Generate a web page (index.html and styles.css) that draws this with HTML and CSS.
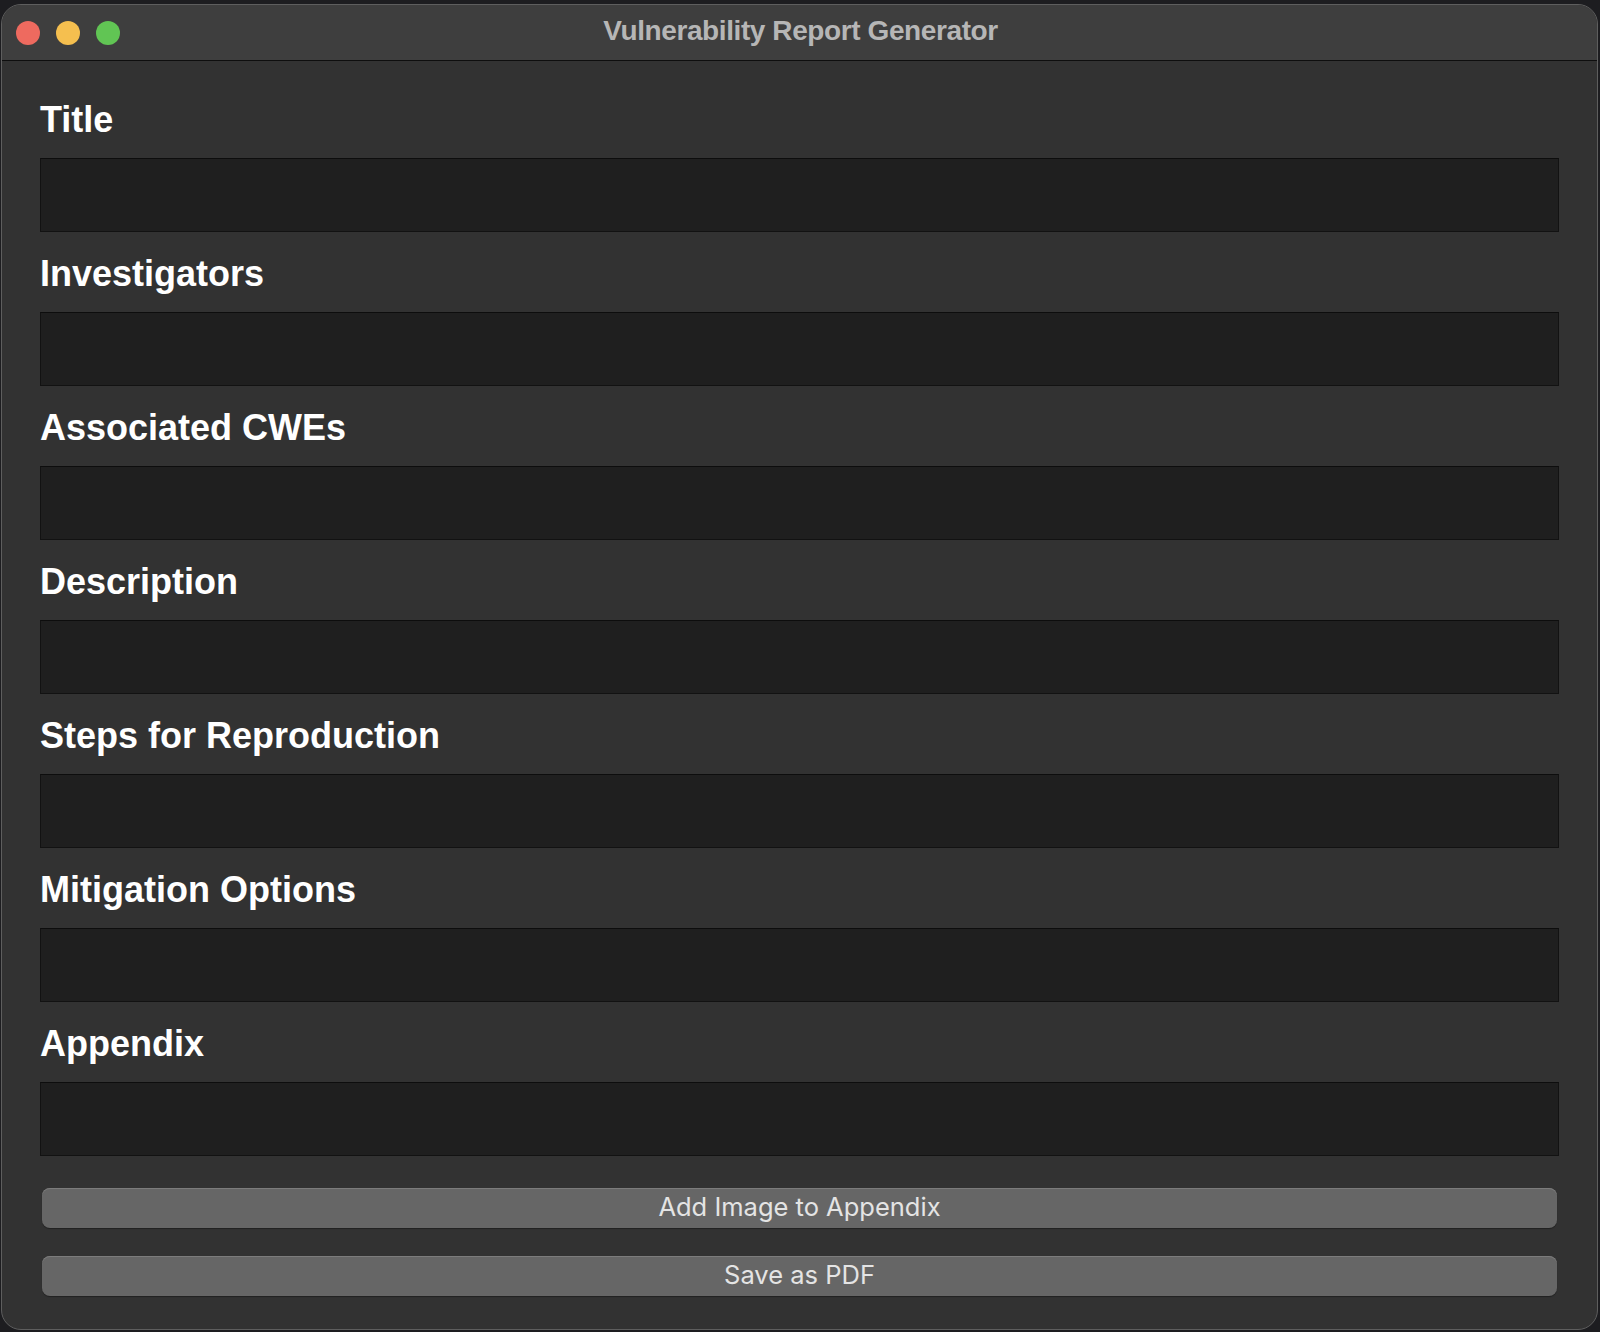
FILE: index.html
```html
<!DOCTYPE html>
<html lang="en">
<head>
<meta charset="utf-8">
<title>Vulnerability Report Generator</title>
<link rel="stylesheet" href="styles.css">
</head>
<body>
<div class="window">
  <header class="titlebar">
    <div class="lights">
      <span class="light red"></span>
      <span class="light yellow"></span>
      <span class="light green"></span>
    </div>
    <div class="wtitle">Vulnerability Report Generator</div>
  </header>
  <main class="content">
    <div class="field"><label class="label">Title</label><div class="input"></div></div>
    <div class="field"><label class="label">Investigators</label><div class="input"></div></div>
    <div class="field"><label class="label">Associated CWEs</label><div class="input"></div></div>
    <div class="field"><label class="label">Description</label><div class="input"></div></div>
    <div class="field"><label class="label">Steps for Reproduction</label><div class="input"></div></div>
    <div class="field"><label class="label">Mitigation Options</label><div class="input"></div></div>
    <div class="field"><label class="label">Appendix</label><div class="input"></div></div>
    <div class="buttons">
      <button class="btn">Add Image to Appendix</button>
      <button class="btn">Save as PDF</button>
    </div>
  </main>
</div>
</body>
</html>
```

FILE: styles.css
```css
html, body {
  margin: 0;
  padding: 0;
  background: #1d1d20;
  width: 1600px;
  height: 1332px;
  overflow: hidden;
}
body {
  padding-top: 4px;
  padding-left: 1px;
  box-sizing: border-box;
}
.window {
  width: 1597px;
  height: 1326px;
  box-sizing: border-box;
  border: 1px solid #5e5e5e;
  border-radius: 20px;
  background: #323232;
  overflow: hidden;
  display: flex;
  flex-direction: column;
}
.titlebar {
  height: 55px;
  flex: none;
  background: #3e3e3e;
  border-bottom: 1px solid #0e0e0e;
  position: relative;
  display: flex;
  align-items: center;
}
.lights {
  display: flex;
  gap: 16px;
  padding-left: 14px;
}
.light {
  width: 24px;
  height: 24px;
  border-radius: 50%;
  display: block;
}
.red { background: #ee6a5f; }
.yellow { background: #f5bf4f; }
.green { background: #61c554; }
.wtitle {
  position: absolute;
  left: 0;
  right: 0;
  top: 0;
  bottom: 0;
  display: flex;
  align-items: center;
  justify-content: center;
  font-family: "Liberation Sans", Arial, sans-serif;
  font-weight: bold;
  font-size: 28px;
  letter-spacing: -0.4px;
  color: #b6b6b6;
  padding-left: 2px;
  padding-bottom: 3px;
}
.content {
  flex: 1;
  padding: 39px 38px 0 38px;
  display: flex;
  flex-direction: column;
}
.field {
  display: flex;
  flex-direction: column;
  margin-bottom: 22px;
}
.label {
  font-family: "Liberation Sans", Arial, sans-serif;
  font-weight: bold;
  font-size: 36px;
  line-height: 40px;
  color: #ffffff;
  height: 40px;
  margin-bottom: 18px;
}
.input {
  height: 74px;
  box-sizing: border-box;
  background: #1f1f1f;
  border: 1px solid #121212;
  border-top-color: #0d0d0d;
}
.buttons {
  display: flex;
  flex-direction: column;
  gap: 28px;
  padding: 10px 2px 0 2px;
}
.btn {
  height: 40px;
  border: none;
  border-radius: 8px;
  background: #666666;
  box-shadow: inset 0 1px 0 #7c7c7c, 0 1px 1px rgba(0,0,0,0.35);
  color: #e4e4e4;
  font-family: Inter, "Liberation Sans", sans-serif;
  font-size: 25.5px;
  padding: 0 0 2px 0;
  line-height: 38px;
}
```
